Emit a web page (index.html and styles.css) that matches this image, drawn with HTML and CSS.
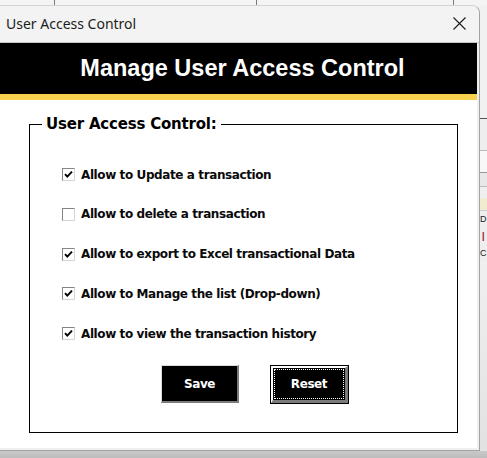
FILE: index.html
```html
<!DOCTYPE html>
<html lang="en">
<head>
<meta charset="utf-8">
<title>User Access Control</title>
<link rel="stylesheet" href="styles.css">
</head>
<body>
<div class="desk">
  <div class="sheet-top"></div>
  <div class="window">
    <div class="titlebar">
      <span class="title">User Access Control</span>
      <svg class="close" width="13" height="13" viewBox="0 0 13 13" aria-hidden="true">
        <path d="M0.5 0.5 L12.5 12.5 M12.5 0.5 L0.5 12.5" stroke="#1a1a1a" stroke-width="1.1" fill="none"/>
      </svg>
    </div>
    <div class="client">
      <div class="banner">Manage User Access Control</div>
      <div class="stripe"></div>
      <div class="content">
        <fieldset class="group">
          <legend class="group-title">User Access Control:</legend>
          <div class="group-body">
            <div class="options">
              <label class="option">
                <span class="box"><svg width="11" height="11" viewBox="0 0 11 11"><polyline points="2,5.2 4.3,7.6 9,2.6" fill="none" stroke="#000" stroke-width="1.9"/></svg></span>
                <span class="option-text">Allow to Update a transaction</span>
              </label>
              <label class="option">
                <span class="box"></span>
                <span class="option-text">Allow to delete a transaction</span>
              </label>
              <label class="option">
                <span class="box"><svg width="11" height="11" viewBox="0 0 11 11"><polyline points="2,5.2 4.3,7.6 9,2.6" fill="none" stroke="#000" stroke-width="1.9"/></svg></span>
                <span class="option-text">Allow to export to Excel transactional Data</span>
              </label>
              <label class="option">
                <span class="box"><svg width="11" height="11" viewBox="0 0 11 11"><polyline points="2,5.2 4.3,7.6 9,2.6" fill="none" stroke="#000" stroke-width="1.9"/></svg></span>
                <span class="option-text">Allow to Manage the list (Drop-down)</span>
              </label>
              <label class="option">
                <span class="box"><svg width="11" height="11" viewBox="0 0 11 11"><polyline points="2,5.2 4.3,7.6 9,2.6" fill="none" stroke="#000" stroke-width="1.9"/></svg></span>
                <span class="option-text">Allow to view the transaction history</span>
              </label>
            </div>
            <div class="actions">
              <div class="btn btn-save">Save</div>
              <div class="btn btn-reset"><div class="face"><div class="focus">Reset</div></div></div>
            </div>
          </div>
        </fieldset>
      </div>
    </div>
  </div>
  <div class="sheet-side">
    <div class="s-a"></div>
    <div class="s-line-dark"></div>
    <div class="s-b"></div>
    <div class="s-box"></div>
    <div class="s-c"></div>
    <div class="s-d"></div>
    <div class="s-yellow"></div>
    <div class="s-glyph">D</div>
    <div class="s-glyph s-red">|</div>
    <div class="s-glyph">C</div>
    <div class="s-rest"></div>
  </div>
  <div class="shadow-bottom"></div>
</div>
</body>
</html>
```
FILE: styles.css
```css
html, body {
  margin: 0;
  padding: 0;
  background: #f2f2f2;
}

.desk {
  display: grid;
  grid-template-columns: 480px 7px;
  grid-template-rows: 5px 446px 7px;
  width: 487px;
  height: 458px;
  overflow: hidden;
}

.sheet-top {
  grid-column: 1 / 3;
  grid-row: 1;
  background:
    linear-gradient(#7a7a7a, #7a7a7a) 54px 0 / 1px 100% no-repeat,
    linear-gradient(#7a7a7a, #7a7a7a) 256px 0 / 1px 100% no-repeat,
    linear-gradient(#7a7a7a, #7a7a7a) 453px 0 / 1px 100% no-repeat,
    #f4f4f4;
}

.window {
  grid-column: 1;
  grid-row: 2;
  display: flex;
  flex-direction: column;
  background: #f0f0f0;
  border-top: 1px solid #d4d4d4;
  border-right: 1px solid #a3a3a3;
  border-bottom: 1px solid #a3a3a3;
  border-top-right-radius: 8px;
  overflow: hidden;
}

.titlebar {
  height: 37px;
  flex: none;
  display: flex;
  align-items: center;
  justify-content: space-between;
  padding: 0 13px 2px 6px;
  box-sizing: border-box;
  background: #f3f3f3;
  border-bottom: 1px solid #c6c6c6;
}

.title {
  font-family: "Noto Sans", "Open Sans", sans-serif;
  font-size: 14px;
  color: #1c1c1c;
}

.close {
  display: block;
}

.client {
  flex: 1;
  margin: 0 2px 2px 0;
  background: #ffffff;
  display: flex;
  flex-direction: column;
}

.banner {
  height: 51px;
  flex: none;
  background: #000000;
  color: #ffffff;
  font-family: "Liberation Sans", Arial, sans-serif;
  font-weight: bold;
  font-size: 23.5px;
  line-height: 51px;
  text-align: center;
  padding-left: 8px;
}

.stripe {
  height: 6px;
  flex: none;
  background: #f8d24e;
}

.content {
  flex: 1;
  padding: 16px 19px 14px 29px;
}

.group {
  margin: 0;
  padding: 0;
  border: 1px solid #000000;
  min-inline-size: 0;
}

.group-title {
  margin-left: 12px;
  padding: 0 4px;
  font-family: "DejaVu Sans", Verdana, sans-serif;
  font-weight: bold;
  font-size: 15px;
  line-height: 17px;
  letter-spacing: -0.2px;
  color: #000000;
}

.group-body {
  padding: 35px 0 28px 32px;
}

.options {
  display: flex;
  flex-direction: column;
  gap: 26.75px;
}

.option {
  display: flex;
  align-items: center;
  gap: 6px;
  height: 13px;
}

.box {
  width: 13px;
  height: 13px;
  box-sizing: border-box;
  border: 1px solid;
  border-color: #858585 #d6d6d6 #d6d6d6 #858585;
  background: #ffffff;
  display: flex;
}

.box svg {
  display: block;
}

.option-text,
.btn {
  font-family: "DejaVu Sans", Verdana, sans-serif;
  font-weight: bold;
  font-size: 12px;
  letter-spacing: -0.4px;
}

.option-text {
  color: #0a0a0a;
  white-space: nowrap;
}

.actions {
  margin-top: 25px;
  margin-left: 99px;
  display: flex;
  align-items: flex-start;
  gap: 31px;
}

.btn {
  box-sizing: border-box;
  background: #000000;
  color: #ffffff;
  display: flex;
  align-items: center;
  justify-content: center;
}

.btn-save {
  width: 78px;
  height: 38px;
  border-style: solid;
  border-width: 1px 2px 2px 1px;
  border-color: #dcdcdc #7c7c7c #7c7c7c #dcdcdc;
}

.btn-reset {
  width: 79px;
  height: 39px;
  border: 1px solid #000000;
  align-items: stretch;
  justify-content: stretch;
}

.face {
  flex: 1;
  display: flex;
  border-style: solid;
  border-width: 2px 3px 3px 2px;
  border-color: #ffffff #7c7c7c #7c7c7c #ffffff;
  background: #000000;
}

.focus {
  flex: 1;
  margin: 1px;
  border: 1px dotted #ffffff;
  display: flex;
  align-items: center;
  justify-content: center;
}

.sheet-side {
  grid-column: 2;
  grid-row: 2;
  display: flex;
  flex-direction: column;
  background: #eeeeee;
  overflow: hidden;
}

.s-a { height: 113px; background: #f1f1f1; }
.s-line-dark { height: 1px; background: #555555; }
.s-b { height: 31px; background: #eeeeee; }
.s-box { height: 22px; background: #f8f8f8; border-top: 1px solid #b8b8b8; box-sizing: border-box; }
.s-c { height: 14px; background: #e8e8e8; border-top: 1px solid #9a9a9a; box-sizing: border-box; }
.s-d { height: 12px; background: #efefef; border-top: 1px solid #bcbcbc; box-sizing: border-box; }
.s-yellow { height: 12px; background: #f1ebcf; border-bottom: 1px solid #cfcfcf; }

.s-glyph {
  height: 17px;
  font-family: "Liberation Sans", Arial, sans-serif;
  font-size: 9px;
  line-height: 17px;
  color: #222222;
}

.s-red {
  color: #9b1010;
  font-weight: bold;
  padding-left: 2px;
}

.s-rest {
  flex: 1;
  background: linear-gradient(#f0f0f0, #e2e2e2);
}

.shadow-bottom {
  grid-column: 1 / 3;
  grid-row: 3;
  background: linear-gradient(#c9c9c9, #bdbdbd);
}
```
